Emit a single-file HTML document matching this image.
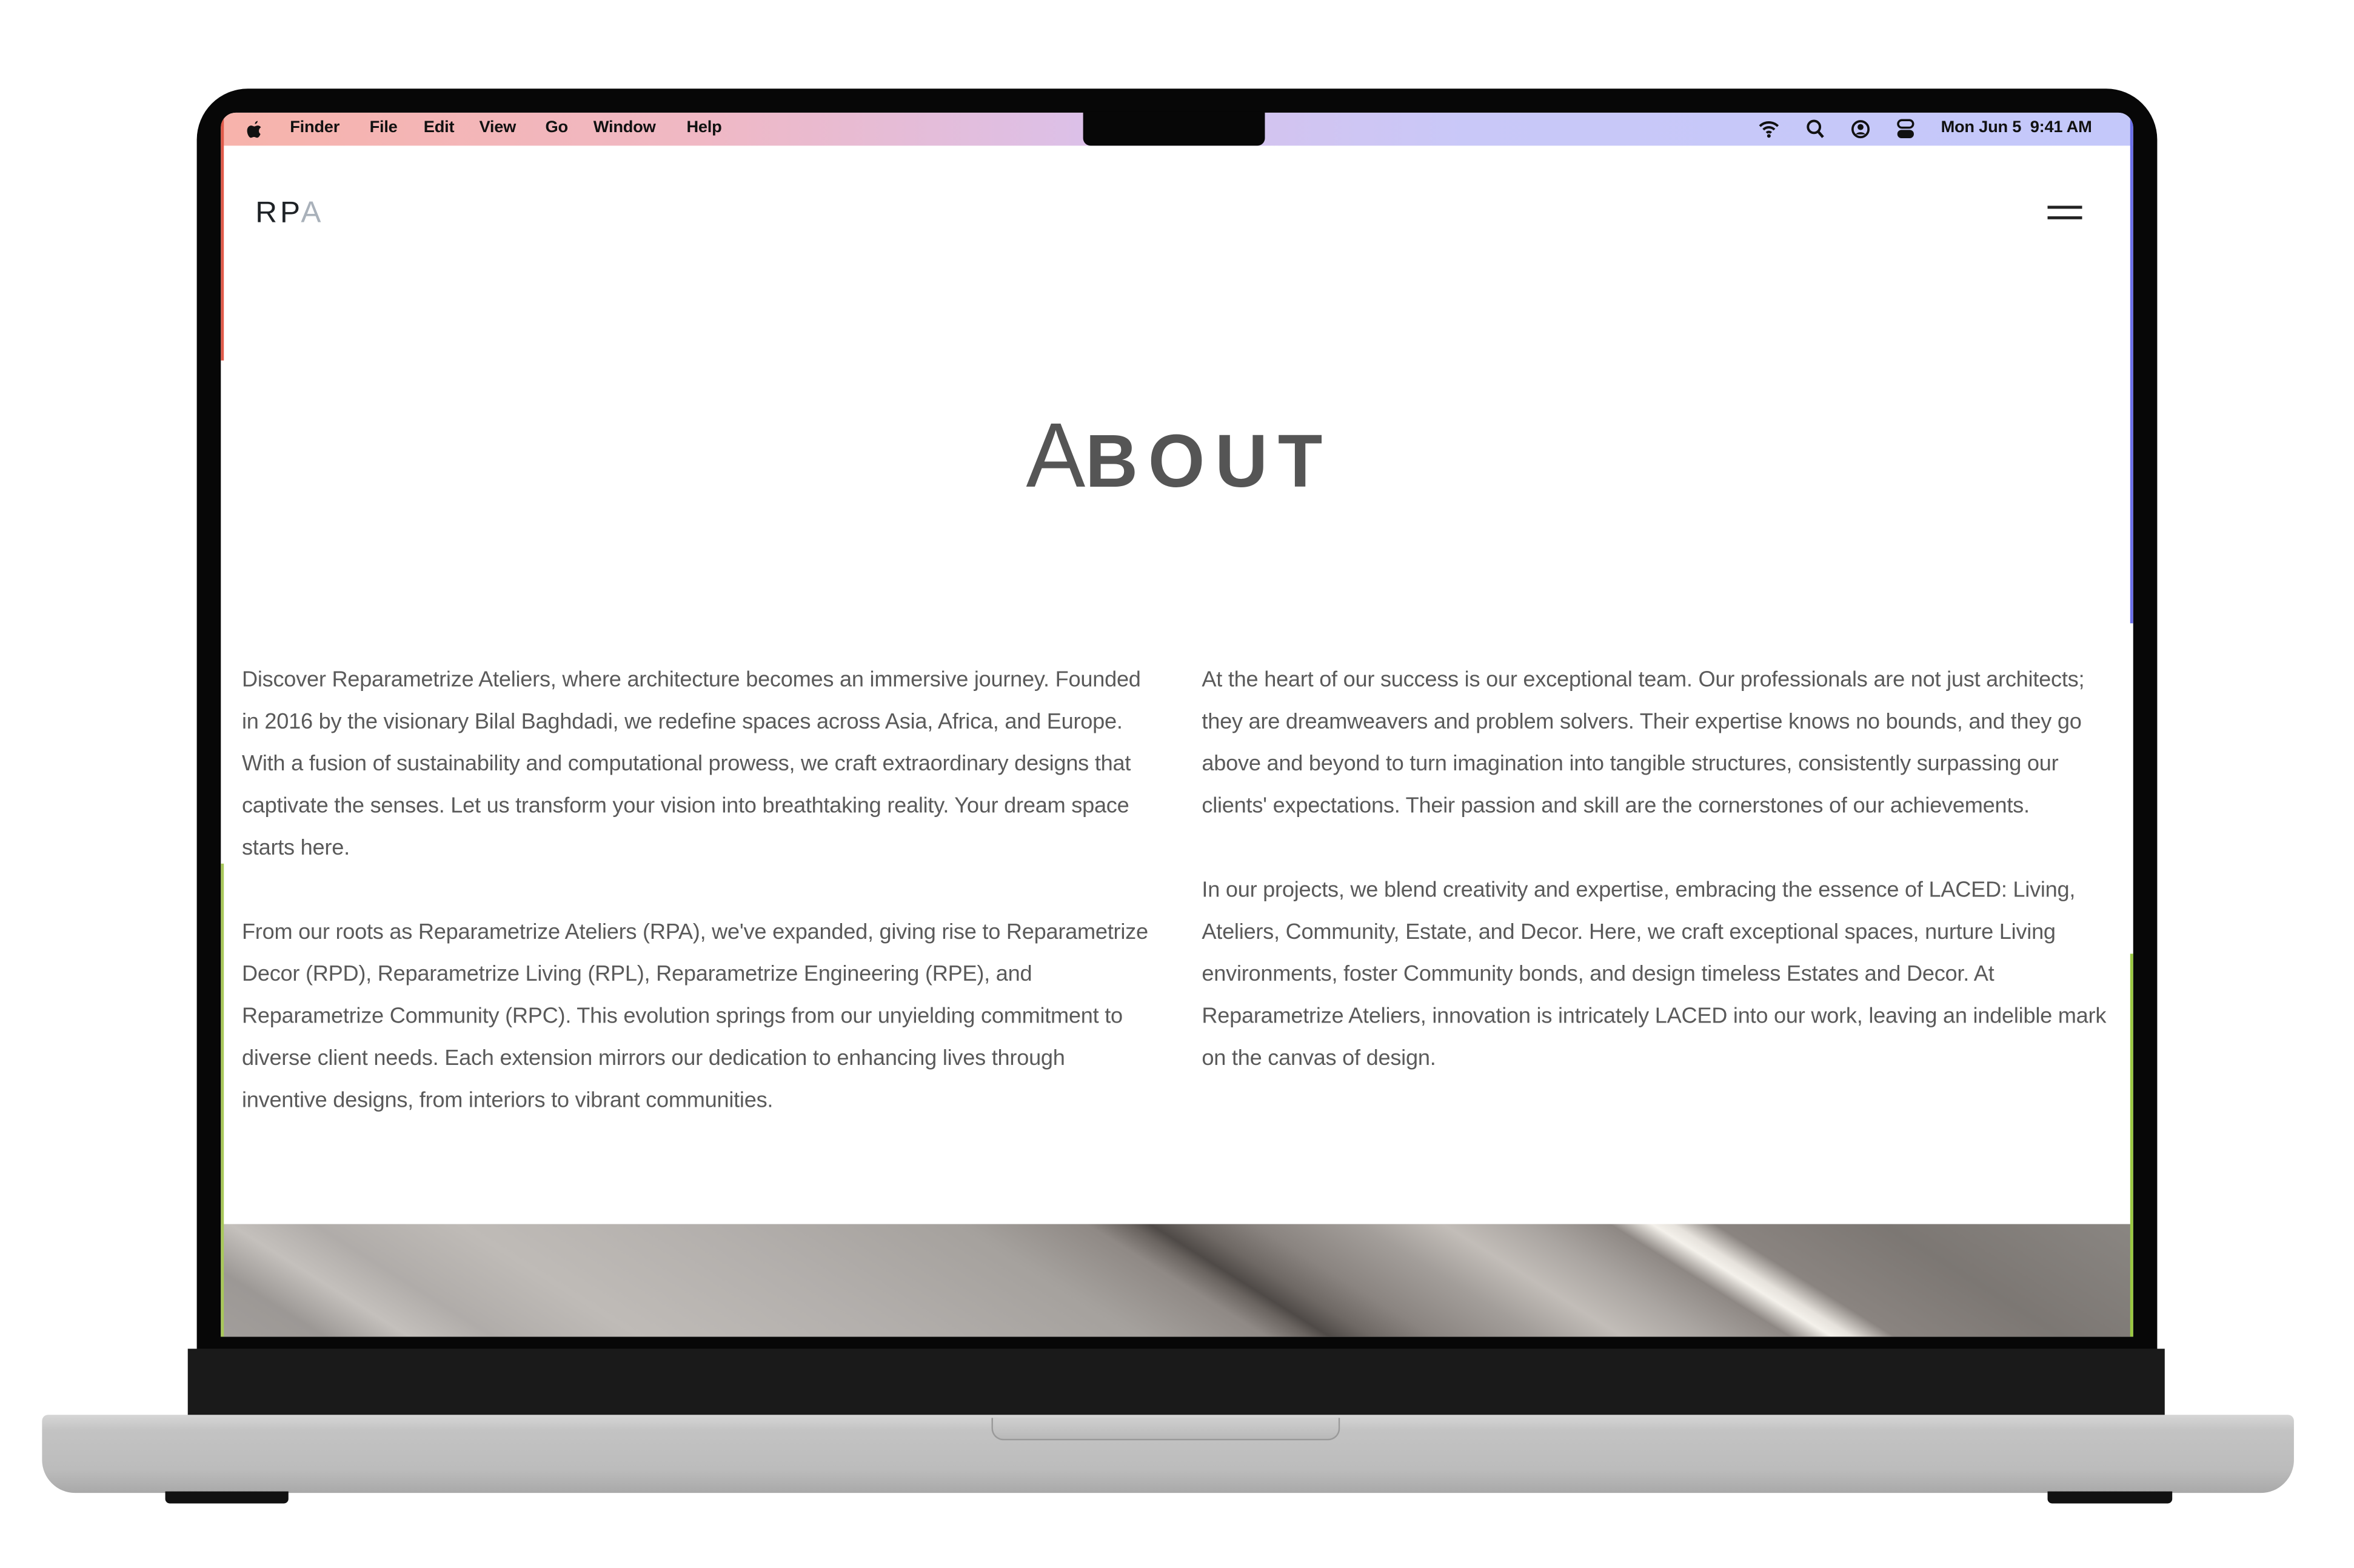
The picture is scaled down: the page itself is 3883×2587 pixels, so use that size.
<!DOCTYPE html>
<html><head><meta charset="utf-8">
<style>
html,body{margin:0;padding:0;background:#fff;}
body{width:3883px;height:2586px;overflow:hidden;position:relative;}
#w{position:absolute;left:0;top:0;width:1567px;height:1044px;transform:scale(2.478);transform-origin:0 0;font-family:"Liberation Sans",sans-serif;}
.a{position:absolute;}
.menu span{position:absolute;top:4px;font-size:11px;font-weight:bold;color:#111;letter-spacing:-0.1px;}
.p{position:absolute;font-size:14.6px;color:#5a5a5a;line-height:28px;white-space:nowrap;letter-spacing:-0.1px;}
</style></head><body><div id="w">
<div class="a" style="left:131px;top:59px;width:1305px;height:860px;background:#070707;border-radius:34px 34px 0 0;"></div>
<div class="a" style="left:125px;top:898px;width:1316px;height:45px;background:#1a1a1a;"></div>
<div class="a" style="left:28px;top:942px;width:1499px;height:52px;background:linear-gradient(#d6d6d6 0%,#c3c3c3 20%,#bcbcbc 70%,#a9a9a9 100%);border-radius:4px 4px 22px 22px;"></div>
<div class="a" style="left:660px;top:944px;width:230px;height:14px;background:linear-gradient(#cfcfcf,#b9b9b9);border:1px solid #9a9a9a;border-top:none;border-radius:0 0 8px 8px;"></div>
<div class="a" style="left:110px;top:993px;width:82px;height:8px;background:#111;border-radius:0 0 3px 3px;"></div>
<div class="a" style="left:1363px;top:993px;width:83px;height:8px;background:#111;border-radius:0 0 3px 3px;"></div>
<div class="a" style="left:147px;top:75px;width:1273px;height:815px;background:#fff;border-radius:10px 10px 0 0;overflow:hidden;">
  <div class="a" style="left:0;top:0;width:1273px;height:22px;background:linear-gradient(90deg,#f7b3ab 0%,#f0b8c4 25%,#dcc0e8 45%,#c9c8f8 65%,#c4c8fa 100%);"></div>
  <div class="a" style="left:0;top:740px;width:1273px;height:75px;background:linear-gradient(32deg,#a29e9b 0%,#9c9895 5%,#c4c0bc 9%,#b0aca9 13%,#bfbbb7 20%,#b3afac 32%,#a5a19d 44%,#8f8985 50%,#6a6460 52%,#4f4a47 53%,#6e6864 55%,#8a8480 58%,#a39e9a 63%,#c2bdb8 67%,#aaa5a1 71%,#8e8884 75%,#f4f1eb 77%,#e6e2dc 78%,#8a8480 80%,#7c7773 88%,#8a8682 100%);"></div>
  <div class="a" style="left:0;top:0;width:2px;height:165px;background:#e05a4a;"></div>
  <div class="a" style="left:0;top:500px;width:2px;height:315px;background:#a8c85a;"></div>
  <div class="a" style="right:0;top:0;width:2px;height:340px;background:#6a6ee8;"></div>
  <div class="a" style="right:0;top:560px;width:2px;height:255px;background:#9ac840;"></div>
</div>
<div class="a" style="left:721px;top:74px;width:121px;height:23px;background:#070707;border-radius:0 0 5px 5px;"></div>
<div class="a menu" style="left:0;top:75px;width:1552px;height:22px;">
  <svg class="a" style="left:164px;top:5px" width="11" height="13" viewBox="0 0 11 13"><path d="M7.5 0.5c0 1-.8 2-1.8 2.1C5.6 1.6 6.5.6 7.5.5zM9.4 9.2c-.5 1.2-1.2 2.5-2.2 2.5-.9 0-1.1-.5-2.1-.5s-1.300.5-2.1.5C1.9 11.7.5 9.3.5 7 .5 4.7 2 3.6 3.2 3.6c.9 0 1.5.6 2.1.6.6 0 1.2-.6 2.2-.6.8 0 1.7.4 2.2 1.2-1.9 1.1-1.6 3.7-.3 4.4z" fill="#111"/></svg>
  <span style="left:193px">Finder</span><span style="left:246px">File</span><span style="left:282px">Edit</span><span style="left:319px">View</span><span style="left:363px">Go</span><span style="left:395px">Window</span><span style="left:457px">Help</span>
  <svg class="a" style="left:1170px;top:4px" width="15" height="13" viewBox="0 0 15 13"><path d="M1.5 5a8.5 8.5 0 0 1 12 0M3.8 7.3a5.2 5.2 0 0 1 7.4 0M6 9.5a2 2 0 0 1 3 0" stroke="#111" stroke-width="1.6" fill="none"/><circle cx="7.5" cy="11.5" r="1.2" fill="#111"/></svg>
  <svg class="a" style="left:1202px;top:4px" width="13" height="14" viewBox="0 0 13 14"><circle cx="5.5" cy="5.5" r="4" stroke="#111" stroke-width="1.6" fill="none"/><path d="M8.5 8.8l3 3.5" stroke="#111" stroke-width="1.8"/></svg>
  <svg class="a" style="left:1232px;top:4px" width="13" height="14" viewBox="0 0 13 14"><circle cx="6.5" cy="7" r="5.3" stroke="#111" stroke-width="1.5" fill="none"/><circle cx="6.5" cy="5.6" r="2" fill="#111"/><path d="M3.3 10.5c1-2 5.4-2 6.4 0" fill="#111"/></svg>
  <svg class="a" style="left:1262px;top:4px" width="13" height="14" viewBox="0 0 13 14"><rect x="1.5" y="1" width="10" height="5" rx="2.5" stroke="#111" stroke-width="1.4" fill="none"/><rect x="1" y="7.5" width="11" height="5.5" rx="2.7" fill="#111"/></svg>
  <span style="left:1292px">Mon Jun 5&nbsp; 9:41 AM</span>
</div>
<div class="a" style="left:170px;top:131px;font-size:20px;letter-spacing:2px;color:#1e2226;">RP<span style="color:#a9b1ba">A</span></div>
<div class="a" style="left:1363px;top:137px;width:23px;height:2px;background:#222;"></div>
<div class="a" style="left:1363px;top:144px;width:23px;height:2px;background:#222;"></div>
<div class="a" style="left:683px;top:268px;white-space:nowrap;color:#555;font-weight:bold;transform:scaleX(0.97);transform-origin:0 0;"><span style="font-size:61px;font-weight:normal;">A</span><span style="font-size:50px;letter-spacing:7px;">BOUT</span></div>
<div class="p" style="left:161px;top:439px;">
Discover Reparametrize Ateliers, where architecture becomes an immersive journey. Founded<br>
in 2016 by the visionary Bilal Baghdadi, we redefine spaces across Asia, Africa, and Europe.<br>
With a fusion of sustainability and computational prowess, we craft extraordinary designs that<br>
captivate the senses. Let us transform your vision into breathtaking reality. Your dream space<br>
starts here.<br><br>
From our roots as Reparametrize Ateliers (RPA), we've expanded, giving rise to Reparametrize<br>
Decor (RPD), Reparametrize Living (RPL), Reparametrize Engineering (RPE), and<br>
Reparametrize Community (RPC). This evolution springs from our unyielding commitment to<br>
diverse client needs. Each extension mirrors our dedication to enhancing lives through<br>
inventive designs, from interiors to vibrant communities.
</div>
<div class="p" style="left:800px;top:439px;">
At the heart of our success is our exceptional team. Our professionals are not just architects;<br>
they are dreamweavers and problem solvers. Their expertise knows no bounds, and they go<br>
above and beyond to turn imagination into tangible structures, consistently surpassing our<br>
clients' expectations. Their passion and skill are the cornerstones of our achievements.<br><br>
In our projects, we blend creativity and expertise, embracing the essence of LACED: Living,<br>
Ateliers, Community, Estate, and Decor. Here, we craft exceptional spaces, nurture Living<br>
environments, foster Community bonds, and design timeless Estates and Decor. At<br>
Reparametrize Ateliers, innovation is intricately LACED into our work, leaving an indelible mark<br>
on the canvas of design.
</div>
</div></body></html>
